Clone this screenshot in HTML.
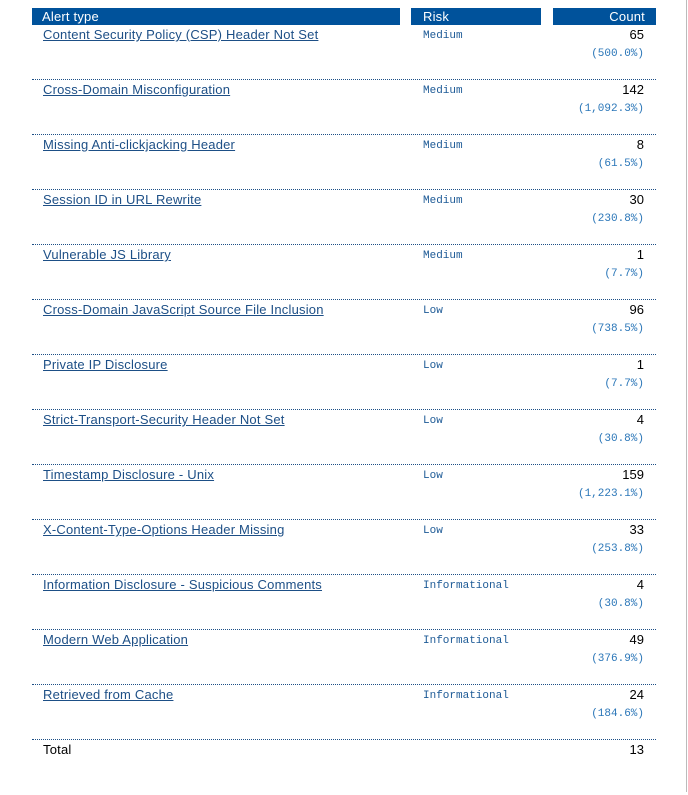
<!DOCTYPE html>
<html><head><meta charset="utf-8"><style>
body{margin:0;width:688px;height:792px;background:#fff;position:relative;overflow:hidden;font-family:"Liberation Sans",sans-serif;font-size:13px;}
.vl{position:absolute;left:686px;top:0;width:1px;height:792px;background:#bbb}
.h{position:absolute;top:8px;height:17px;background:#00529b;color:#fff;font-size:13px;line-height:17px;letter-spacing:0.2px}
.row{position:absolute;left:32px;width:624px;height:55px}
.sep{position:absolute;left:0;bottom:0;width:624px;border-bottom:1px dotted #1d4f86}
.n{position:absolute;left:11px;top:2px;color:#1d4f86;text-decoration:underline;line-height:16px;letter-spacing:0.2px;white-space:nowrap}
.r{position:absolute;left:391px;top:3px;font-family:"Liberation Mono",monospace;font-size:11px;color:#1d5a96;line-height:16px}
.c{position:absolute;right:12px;top:2px;color:#000;line-height:16px}
.p{position:absolute;right:12px;top:21px;font-family:"Liberation Mono",monospace;font-size:11px;color:#2a76b8;line-height:16px}
</style></head><body>
<div class="vl"></div>
<div class="h" style="left:32px;width:358px;padding-left:10px">Alert type</div>
<div class="h" style="left:411px;width:118px;padding-left:12px">Risk</div>
<div class="h" style="left:553px;width:92px;padding-right:11px;text-align:right">Count</div>

<div class="row" style="top:25px"><div class="n">Content Security Policy (CSP) Header Not Set</div><div class="r">Medium</div><div class="c">65</div><div class="p">(500.0%)</div><div class="sep"></div></div>
<div class="row" style="top:80px"><div class="n">Cross-Domain Misconfiguration</div><div class="r">Medium</div><div class="c">142</div><div class="p">(1,092.3%)</div><div class="sep"></div></div>
<div class="row" style="top:135px"><div class="n">Missing Anti-clickjacking Header</div><div class="r">Medium</div><div class="c">8</div><div class="p">(61.5%)</div><div class="sep"></div></div>
<div class="row" style="top:190px"><div class="n">Session ID in URL Rewrite</div><div class="r">Medium</div><div class="c">30</div><div class="p">(230.8%)</div><div class="sep"></div></div>
<div class="row" style="top:245px"><div class="n">Vulnerable JS Library</div><div class="r">Medium</div><div class="c">1</div><div class="p">(7.7%)</div><div class="sep"></div></div>
<div class="row" style="top:300px"><div class="n">Cross-Domain JavaScript Source File Inclusion</div><div class="r">Low</div><div class="c">96</div><div class="p">(738.5%)</div><div class="sep"></div></div>
<div class="row" style="top:355px"><div class="n">Private IP Disclosure</div><div class="r">Low</div><div class="c">1</div><div class="p">(7.7%)</div><div class="sep"></div></div>
<div class="row" style="top:410px"><div class="n">Strict-Transport-Security Header Not Set</div><div class="r">Low</div><div class="c">4</div><div class="p">(30.8%)</div><div class="sep"></div></div>
<div class="row" style="top:465px"><div class="n">Timestamp Disclosure - Unix</div><div class="r">Low</div><div class="c">159</div><div class="p">(1,223.1%)</div><div class="sep"></div></div>
<div class="row" style="top:520px"><div class="n">X-Content-Type-Options Header Missing</div><div class="r">Low</div><div class="c">33</div><div class="p">(253.8%)</div><div class="sep"></div></div>
<div class="row" style="top:575px"><div class="n">Information Disclosure - Suspicious Comments</div><div class="r">Informational</div><div class="c">4</div><div class="p">(30.8%)</div><div class="sep"></div></div>
<div class="row" style="top:630px"><div class="n">Modern Web Application</div><div class="r">Informational</div><div class="c">49</div><div class="p">(376.9%)</div><div class="sep"></div></div>
<div class="row" style="top:685px"><div class="n">Retrieved from Cache</div><div class="r">Informational</div><div class="c">24</div><div class="p">(184.6%)</div><div class="sep"></div></div>
<div class="row" style="top:740px"><div class="n" style="color:#000;text-decoration:none">Total</div><div class="c">13</div></div>
</body></html>
